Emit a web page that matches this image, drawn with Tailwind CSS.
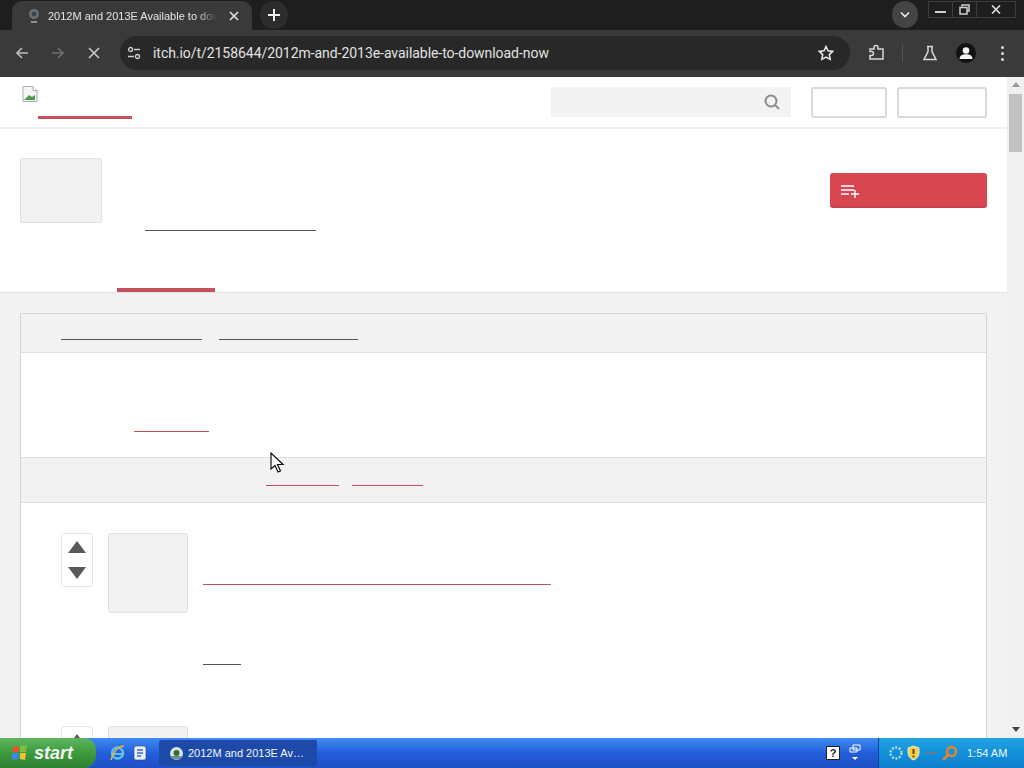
<!DOCTYPE html>
<html lang="en">
<head>
  <meta charset="UTF-8" />
  <title>2012M and 2013E Available to download now</title>
  <script src="https://cdn.jsdelivr.net/npm/@tailwindcss/browser@4"></script>
</head>
<body class="w-[1024px] h-[768px] overflow-hidden flex flex-col relative bg-white font-['Liberation_Sans',sans-serif]">

  <!-- Tab strip -->
  <div class="h-[30px] shrink-0 bg-[#1e1e1e] flex items-start">
    <div class="ml-[12px] mt-[1px] w-[240px] h-[29px] bg-[#3a3a3a] rounded-t-[10px] flex items-center pl-[14px] text-[#e4e4e4]">
      <svg class="w-[16px] h-[18px] shrink-0" viewBox="0 0 16 18"><circle cx="8" cy="7" r="5" fill="#6b7378"/><circle cx="8" cy="7" r="2.5" fill="#3f4549"/><path d="M5 14h6v2H5z" fill="#8a9094"/></svg>
      <span class="ml-[6px] w-[169px] whitespace-nowrap text-[11px] leading-[16px] [mask-image:linear-gradient(to_right,black_88%,transparent)]">2012M and 2013E Available to dow</span>
      <svg class="w-[10px] h-[10px] ml-[12px] shrink-0" viewBox="0 0 10 10"><path d="M1 1l8 8M9 1l-8 8" stroke="#e4e4e4" stroke-width="1.6"/></svg>
    </div>
    <div class="ml-[8px] mt-[1px] w-[28px] h-[28px] rounded-full bg-[#2c2c2c] flex items-center justify-center">
      <svg class="w-[12px] h-[12px]" viewBox="0 0 12 12"><path d="M6 0v12M0 6h12" stroke="#f0f0f0" stroke-width="2"/></svg>
    </div>
    <div class="ml-auto mt-[1px] w-[26px] h-[27px] rounded-full bg-[#444] flex items-center justify-center">
      <svg class="w-[10px] h-[7px]" viewBox="0 0 10 7"><path d="M1 1.5l4 4 4-4" fill="none" stroke="#e8e8e8" stroke-width="1.6"/></svg>
    </div>
    <div class="ml-[10px] mr-[8px] mt-[1px] w-[88px] h-[17px] border border-[#3c3c3c] flex items-center">
      <div class="w-[24px] flex justify-center border-r border-[#3c3c3c] h-full items-center"><div class="w-[11px] h-[2px] mt-[5px] bg-[#d0d0d0]"></div></div>
      <div class="w-[24px] flex justify-center border-r border-[#3c3c3c] h-full items-center">
        <svg class="w-[11px] h-[11px]" viewBox="0 0 11 11"><path d="M3 2.5V1h7v6H8.500M1 3.500h7v6.500H1z" fill="none" stroke="#d0d0d0" stroke-width="1.500"/></svg>
      </div>
      <div class="flex-1 flex justify-center">
        <svg class="w-[10px] h-[9px]" viewBox="0 0 10 9"><path d="M1 0.500l8 8M9 0.500l-8 8" stroke="#d8d8d8" stroke-width="1.700"/></svg>
      </div>
    </div>
  </div>

  <!-- Toolbar -->
  <div class="h-[47px] shrink-0 bg-[#3a3a3a] flex items-center pb-[1px] text-[#d4d4d4]">
    <svg class="w-[14px] h-[14px] ml-[15px]" viewBox="0 0 14 14"><path d="M13 7H2M7 2L2 7l5 5" fill="none" stroke="#bdbdbd" stroke-width="1.600"/></svg>
    <svg class="w-[14px] h-[14px] ml-[22px]" viewBox="0 0 14 14"><path d="M1 7h11M7 2l5 5-5 5" fill="none" stroke="#6f6f6f" stroke-width="1.600"/></svg>
    <svg class="w-[12px] h-[12px] ml-[23px]" viewBox="0 0 12 12"><path d="M1 1l10 10M11 1L1 11" stroke="#c8c8c8" stroke-width="1.600"/></svg>
    <div class="ml-[20px] w-[730px] h-[34px] rounded-full bg-[#282828] flex items-center pl-[7px]">
      <svg class="w-[14px] h-[14px] shrink-0" viewBox="0 0 14 14"><circle cx="3.500" cy="3.500" r="2" fill="none" stroke="#d0d0d0" stroke-width="1.300"/><path d="M7 3.500h6M1 10.500h6" stroke="#d0d0d0" stroke-width="1.500"/><circle cx="10.500" cy="10.500" r="2" fill="none" stroke="#d0d0d0" stroke-width="1.300"/></svg>
      <span class="ml-[12px] text-[14px] leading-[18px] tracking-[-0.05px] text-[#e2e2e2] whitespace-nowrap font-['Roboto',sans-serif]">itch.io/t/2158644/2012m-and-2013e-available-to-download-now</span>
      <svg class="w-[16px] h-[16px] ml-auto mr-[16px]" viewBox="0 0 16 16"><path d="M8 1.500l2 4.300 4.700.6-3.400 3.200.9 4.700L8 12l-4.200 2.300.9-4.700L1.300 6.400 6 5.800z" fill="none" stroke="#e8e8e8" stroke-width="1.500"/></svg>
    </div>
    <svg class="w-[18px] h-[18px] ml-[18px]" viewBox="0 0 18 18"><path d="M2 5h4V3.500a2 2 0 0 1 4 0V5h5v10H2v-3.500h1.500a2 2 0 0 0 0-4H2z" fill="none" stroke="#d8d8d8" stroke-width="1.500"/></svg>
    <div class="w-[1px] h-[18px] ml-[16px] bg-[#555]"></div>
    <svg class="w-[16px] h-[16px] ml-[19px]" viewBox="0 0 16 16"><path d="M5 1.500h6M6 1.500v5L2 14.500h12l-4-8v-5" fill="none" stroke="#d8d8d8" stroke-width="1.500"/></svg>
    <div class="w-[20px] h-[20px] ml-[18px] rounded-full bg-[#111] flex items-center justify-center overflow-hidden">
      <svg class="w-[20px] h-[20px]" viewBox="0 0 20 20"><circle cx="10" cy="7.500" r="3.300" fill="#f2f2f2"/><path d="M3.500 16c0-3.500 3-4.800 6.500-4.800s6.500 1.300 6.500 4.800z" fill="#f2f2f2"/></svg>
    </div>
    <div class="ml-[25px] flex flex-col gap-[3px]">
      <div class="w-[3px] h-[3px] rounded-full bg-[#dcdcdc]"></div>
      <div class="w-[3px] h-[3px] rounded-full bg-[#dcdcdc]"></div>
      <div class="w-[3px] h-[3px] rounded-full bg-[#dcdcdc]"></div>
    </div>
  </div>

  <!-- Viewport -->
  <div class="flex-1 flex min-h-0">
    <div class="w-[1007px] shrink-0 bg-[#f2f2f2] overflow-hidden">

      <!-- Site header -->
      <div class="h-[52px] bg-white border-b-2 border-[#f0f0f0] flex items-start">
        <div class="ml-[22px] mt-[9px] w-[16px] h-[16px]">
          <svg class="w-[16px] h-[16px]" viewBox="0 0 16 16"><path d="M1 .5h10l4 4v11H1z" fill="#f4f6f6" stroke="#a8adb0"/><path d="M11 .5v4h4" fill="#fff" stroke="#a8adb0"/><path d="M2 14l5-5 3 2 3-2v5z" fill="#4f9a4a"/></svg>
        </div>
        <div class="mt-[39px] w-[94px] h-[3px] bg-[#c4505c]"></div>
        <div class="ml-[419px] mt-[10px] w-[240px] h-[30px] bg-[#f3f3f3] rounded-[2px] flex items-center justify-end pr-[11px]">
          <svg class="w-[16px] h-[16px]" viewBox="0 0 16 16"><circle cx="7" cy="7" r="5.500" fill="none" stroke="#8c8c8c" stroke-width="2"/><path d="M11 11l4 4" stroke="#8c8c8c" stroke-width="2"/></svg>
        </div>
        <div class="ml-[20px] mt-[10px] w-[76px] h-[31px] border-2 border-[#d9d9d9] rounded-[3px]"></div>
        <div class="ml-[10px] mt-[10px] w-[90px] h-[31px] border-2 border-[#d9d9d9] rounded-[3px]"></div>
      </div>

      <!-- Game banner -->
      <div class="h-[164px] bg-white border-b border-[#e2e2e2] flex flex-col">
        <div class="flex-1 flex items-start">
          <div class="ml-[20px] mt-[29px] w-[82px] h-[65px] bg-[#f2f2f2] border border-[#e0e0e0] rounded-[2px]"></div>
          <div class="ml-[43px] mt-[101px] w-[171px] h-[1px] bg-[#555]"></div>
          <div class="ml-[514px] mt-[44px] w-[157px] h-[35px] bg-[#d8464f] border-b-2 border-[#c2434d] rounded-[3px] flex items-center pl-[11px]">
            <svg class="w-[19px] h-[14px] mt-[2px]" viewBox="0 0 19 14"><path d="M0 2h13M0 6h13M0 10h8M14 6v8M10 10h8" stroke="#fff" stroke-width="1.500"/></svg>
          </div>
        </div>
        <div class="ml-[117px] w-[98px] h-[4px] bg-[#c4505c]"></div>
      </div>

      <!-- Topic card -->
      <div class="mt-[20px] mx-[20px] w-[967px] bg-white border border-[#d4d4d4] border-b-0 rounded-t-[2px]">
        <div class="h-[39px] bg-[#f2f2f2] border-b border-[#dedede] flex items-start pl-[40px]">
          <div class="mt-[25px] w-[141px] h-[1px] bg-[#555]"></div>
          <div class="ml-[17px] mt-[25px] w-[139px] h-[1px] bg-[#555]"></div>
        </div>
        <div class="h-[104px] pl-[113px] pt-[78px]">
          <div class="w-[75px] h-[1px] bg-[#c4505c]"></div>
        </div>
        <div class="h-[46px] bg-[#f2f2f2] border-y border-[#dedede] flex items-start pl-[245px]">
          <div class="mt-[27px] w-[73px] h-[1px] bg-[#c4505c]"></div>
          <div class="ml-[13px] mt-[27px] w-[71px] h-[1px] bg-[#c4505c]"></div>
        </div>

        <!-- Posts -->
        <div class="pt-[30px] pl-[40px] flex flex-col gap-[113px]">
          <div class="flex items-start h-[80px]">
            <div class="w-[32px] h-[54px] border border-[#e6e6e6] rounded-[3px] flex flex-col items-center justify-center gap-[14px]">
              <div class="w-0 h-0 border-x-[9px] border-x-transparent border-b-[12px] border-b-[#5a5a5a]"></div>
              <div class="w-0 h-0 border-x-[9px] border-x-transparent border-t-[12px] border-t-[#5a5a5a]"></div>
            </div>
            <div class="ml-[15px] w-[80px] h-[80px] bg-[#f2f2f2] border border-[#e2e2e2] rounded-[3px]"></div>
            <div class="ml-[15px] flex flex-col">
              <div class="mt-[51px] w-[348px] h-[1px] bg-[#c4505c]"></div>
              <div class="mt-[79px] w-[38px] h-[1px] bg-[#555]"></div>
            </div>
          </div>
          <div class="flex items-start h-[80px]">
            <div class="w-[32px] h-[54px] border border-[#e6e6e6] rounded-[3px] flex flex-col items-center justify-center gap-[14px]">
              <div class="w-0 h-0 border-x-[9px] border-x-transparent border-b-[12px] border-b-[#5a5a5a]"></div>
              <div class="w-0 h-0 border-x-[9px] border-x-transparent border-t-[12px] border-t-[#5a5a5a]"></div>
            </div>
            <div class="ml-[15px] w-[80px] h-[80px] bg-[#f2f2f2] border border-[#e2e2e2] rounded-[3px]"></div>
          </div>
        </div>
      </div>
    </div>

    <!-- Scrollbar -->
    <div class="w-[17px] shrink-0 bg-[#f0f0f0] flex flex-col items-center">
      <div class="w-0 h-0 mt-[5px] border-x-[4px] border-x-transparent border-b-[5px] border-b-[#9a9a9a]"></div>
      <div class="w-[13px] h-[58px] mt-[7px] bg-[#c2c2c2]"></div>
      <div class="w-0 h-0 mt-auto mb-[6px] border-x-[4px] border-x-transparent border-t-[5px] border-t-[#444]"></div>
    </div>
  </div>

  <!-- XP taskbar -->
  <div class="h-[30px] shrink-0 bg-gradient-to-b from-[#3f8cf3] via-[#245edb] to-[#1f4fc4] flex items-stretch text-white">
    <div class="w-[96px] rounded-r-[12px] bg-gradient-to-b from-[#5fb55f] via-[#3c9a3c] to-[#2f7f33] flex items-center pl-[11px]">
      <svg class="w-[18px] h-[18px]" viewBox="0 0 18 18"><path d="M2 3l6-1v6H1z" fill="#e8542a"/><path d="M9 2l7-1-1 7H9z" fill="#7cc043"/><path d="M1 9h7v6l-7 1z" fill="#3a8ae0"/><path d="M9 9h6l-1 7-5-1z" fill="#f6c12e"/></svg>
      <span class="ml-[5px] text-[18px] leading-[20px] font-bold italic font-['Liberation_Sans',sans-serif] text-[#f4f4f4]">start</span>
    </div>
    <div class="ml-[13px] flex items-center gap-[6px]">
      <svg class="w-[17px] h-[18px]" viewBox="0 0 17 18"><circle cx="8.500" cy="9" r="5.500" fill="none" stroke="#5ec0ee" stroke-width="2.500"/><path d="M3 10h11" stroke="#5ec0ee" stroke-width="2"/><path d="M2 16C4 8 9 2 15 2" fill="none" stroke="#e8b23c" stroke-width="1.500"/></svg>
      <svg class="w-[16px] h-[18px]" viewBox="0 0 16 18"><rect x="2" y="2" width="12" height="14" rx="2" fill="#e8eef8" stroke="#345" stroke-width=".6"/><path d="M5 6h6M5 9h6M5 12h4" stroke="#3a6fd0" stroke-width="1.500"/></svg>
    </div>
    <div class="ml-[11px] my-[2px] w-[158px] rounded-[2px] bg-[#1d4aa8] flex items-center pl-[10px]">
      <svg class="w-[15px] h-[15px] shrink-0" viewBox="0 0 15 15"><circle cx="7.500" cy="7.500" r="6.500" fill="#d5e4e4"/><circle cx="7.500" cy="7" r="3" fill="#356d3e"/><path d="M2 10a6 6 0 0 0 11 0z" fill="#6d8b8f"/></svg>
      <span class="ml-[4px] text-[11px] leading-[14px] whitespace-nowrap text-[#f0f4ff]">2012M and 2013E Av…</span>
    </div>
    <div class="ml-auto flex items-center">
      <div class="w-[14px] h-[14px] bg-white border border-[#222] text-[11px] leading-[12px] font-bold text-center text-[#222]">?</div>
      <svg class="w-[12px] h-[18px] ml-[9px]" viewBox="0 0 12 18"><path d="M4 1h7v5H4zM1 4h7v4H1z" fill="none" stroke="#fff"/><path d="M3 13h6l-3 3z" fill="#fff"/></svg>
    </div>
    <div class="ml-[17px] w-[146px] bg-gradient-to-b from-[#22a3e4] via-[#1290d9] to-[#0f7fcc] border-l border-[#0f3f8f] flex items-center pl-[10px]">
      <svg class="w-[14px] h-[16px]" viewBox="0 0 14 16"><circle cx="7" cy="8" r="5.500" fill="none" stroke="#a8d8e8" stroke-width="2.500" stroke-dasharray="2 1.500"/></svg>
      <svg class="w-[13px] h-[16px] ml-[4px]" viewBox="0 0 13 16"><path d="M6.500 1L12 3v5c0 3.500-3 6-5.500 7C4 14 1 11.500 1 8V3z" fill="#f3d24a" stroke="#dfe8ee"/><path d="M6.500 4v5" stroke="#7a3b10" stroke-width="2"/><path d="M6.500 10.500v2" stroke="#7a3b10" stroke-width="2"/></svg>
      <svg class="w-[12px] h-[6px] ml-[5px]" viewBox="0 0 12 6"><path d="M0 3h12" stroke="#5d7f99" stroke-width="2"/></svg>
      <svg class="w-[16px] h-[16px] ml-[5px]" viewBox="0 0 16 16"><circle cx="9.500" cy="6.500" r="4.500" fill="none" stroke="#e8842a" stroke-width="2.500"/><path d="M6 10l-5 5" stroke="#e8842a" stroke-width="2.500"/></svg>
      <span class="ml-[9px] text-[11px] leading-[14px] whitespace-nowrap text-[#f0f8ff]">1:54 AM</span>
    </div>
  </div>

  <!-- Mouse pointer, over the page -->
  <svg class="absolute left-[270px] top-[452px] w-[15px] h-[22px]" viewBox="0 0 15 22"><path d="M1 1v16l4-3.500 3 6.500 2.500-1-3-6.500H13z" fill="#fff" stroke="#111" stroke-width="1.200"/></svg>
</body>
</html>
